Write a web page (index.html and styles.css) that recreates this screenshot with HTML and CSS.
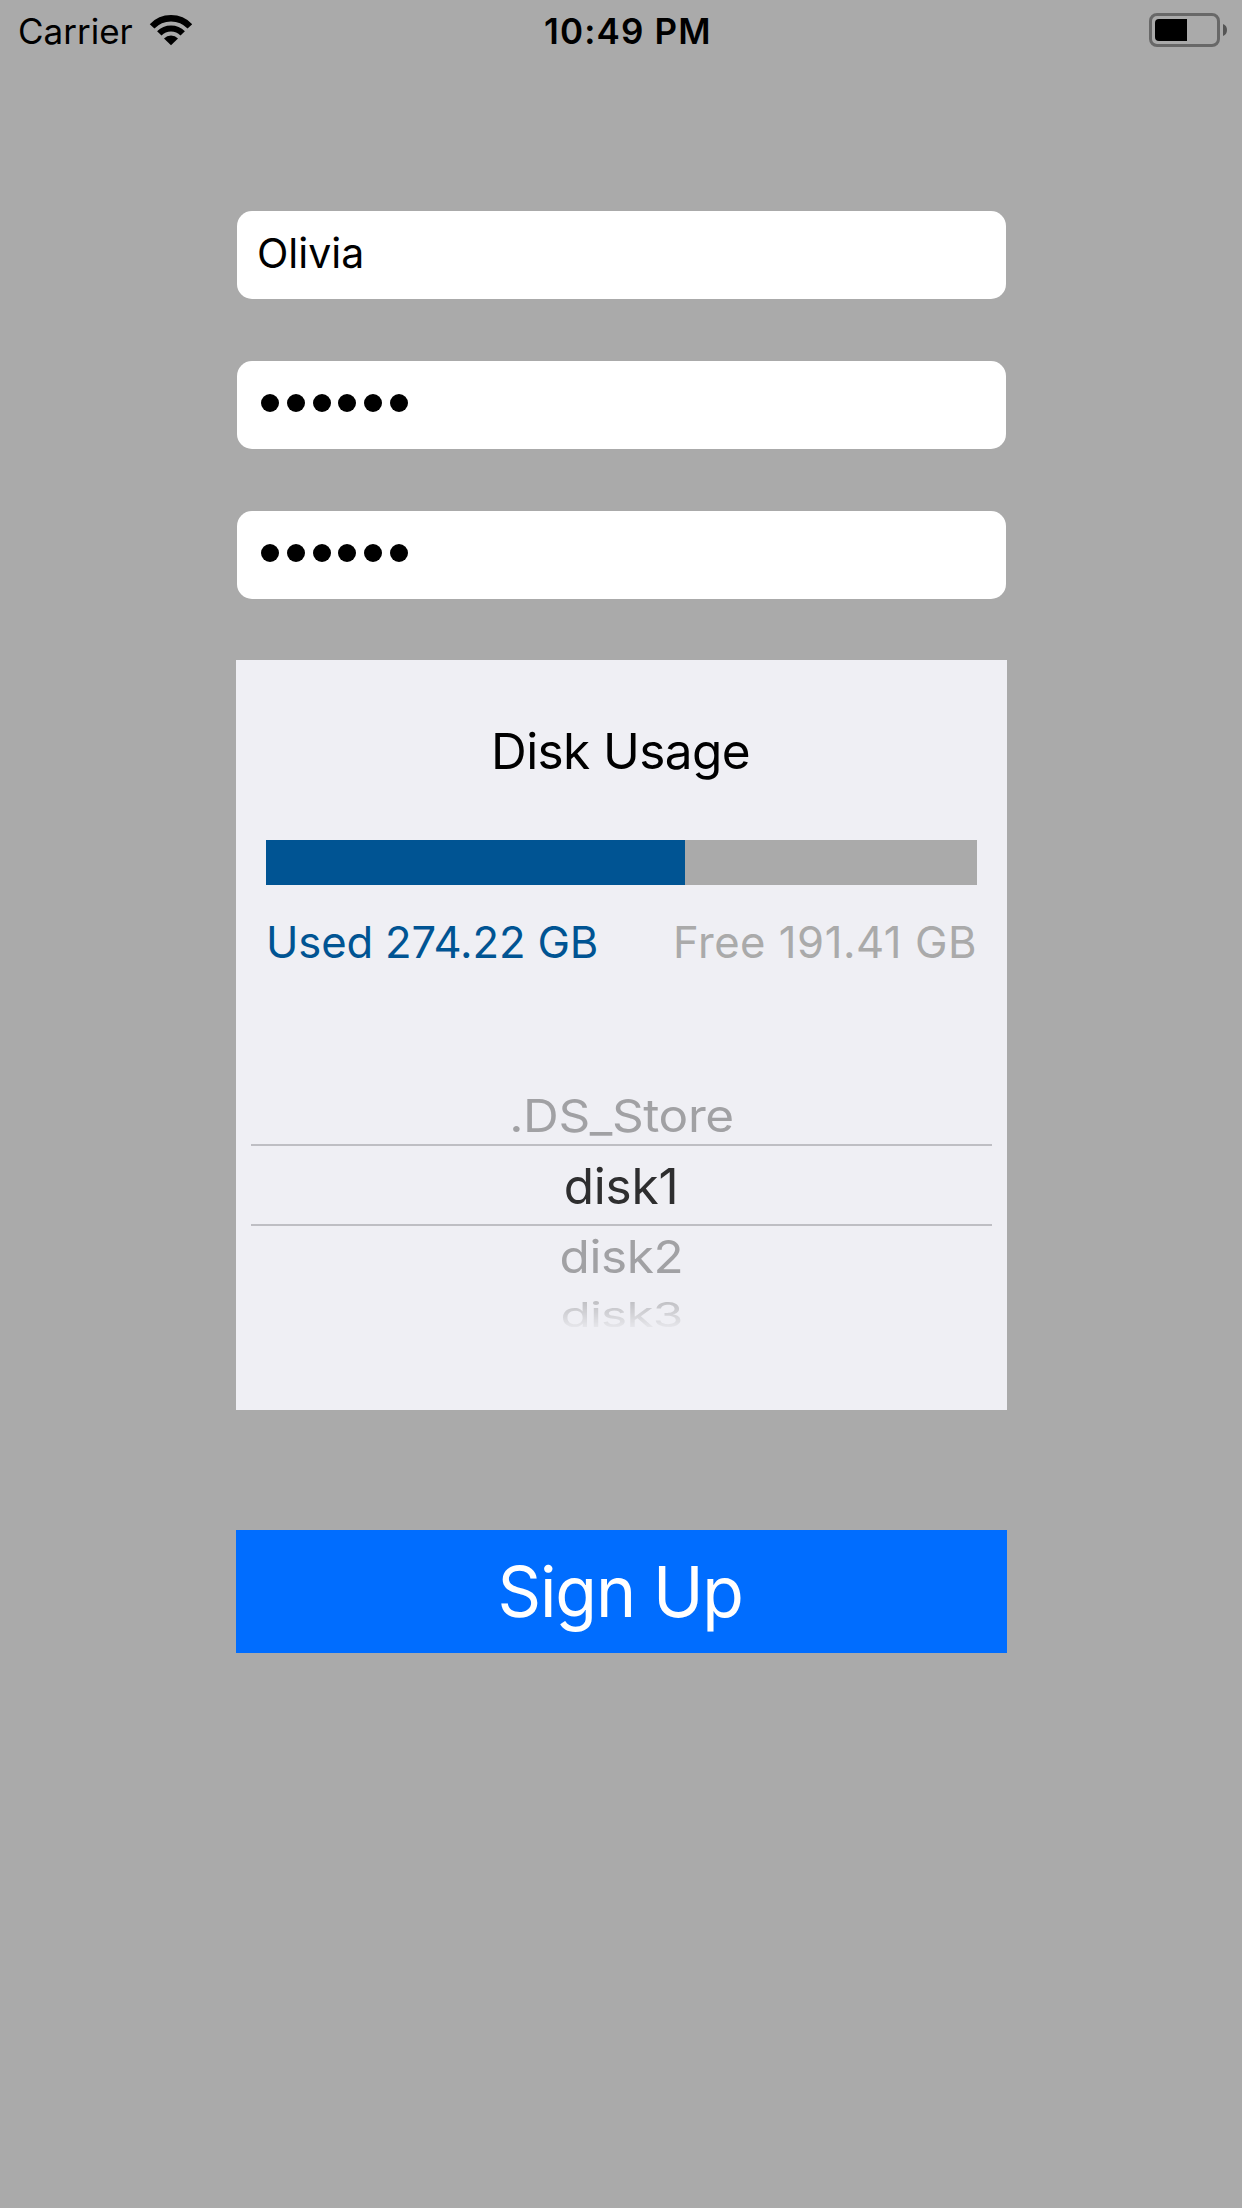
FILE: index.html
```html
<!DOCTYPE html>
<html lang="en">
<head>
<meta charset="utf-8">
<title>Sign Up</title>
<link rel="stylesheet" href="styles.css">
</head>
<body>
<header class="status">
  <div class="network">
    <span class="carrier">Carrier</span>
    <svg class="wifi" width="44" height="32" viewBox="0 0 44 32">
      <g fill="none" stroke="#000">
        <path d="M3.1 12.4A26.1 26.1 0 0 1 40.9 12.4" stroke-width="6.4"/>
        <path d="M10.3 19.4A16.4 16.4 0 0 1 33.7 19.4" stroke-width="6.2"/>
      </g>
      <path d="M22 31.2L15 24.4A10 10 0 0 1 29 24.4Z"/>
    </svg>
  </div>
  <span class="time">10:49 PM</span>
  <svg class="battery" width="80" height="34" viewBox="0 0 80 34">
    <rect x="1.5" y="1.5" width="68" height="31" rx="6.5" fill="none" stroke="#686868" stroke-width="3"/>
    <path d="M38 6V28H10Q6 28 6 24V10Q6 6 10 6Z"/>
    <path d="M74 11Q78 12.5 78 17T74 23Z" fill="#555"/>
  </svg>
</header>
<main class="form">
  <div class="field name">Olivia</div>
  <div class="field dots"><i></i><i></i><i></i><i></i><i></i><i></i></div>
  <div class="field dots"><i></i><i></i><i></i><i></i><i></i><i></i></div>
  <section class="card">
    <h1 class="title">Disk Usage</h1>
    <div class="bar"><div class="used-bar"></div></div>
    <div class="labels"><span class="used">Used 274.22 GB</span><span class="free">Free 191.41 GB</span></div>
    <div class="picker">
      <div class="row store"><span>.DS_Store</span></div>
      <div class="row selected"><span>disk1</span></div>
      <div class="row below"><span>disk2</span></div>
      <div class="row last"><span>disk3</span></div>
    </div>
  </section>
  <button class="signup"><span>Sign Up</span></button>
</main>
</body>
</html>
```
FILE: styles.css
```css
* { box-sizing: border-box; }
body {
  margin: 0;
  min-height: 2208px;
  background: #aaa;
  color: #000;
  font-family: Inter, "Liberation Sans", sans-serif;
}
.status {
  display: grid;
  grid-template-columns: 544px 1fr 93px;
  height: 62px;
  font-size: 35px;
  line-height: 62px;
}
.network { display: flex; padding-left: 18px; }
.carrier { width: 131px; }
.wifi { margin-top: 14px; }
.time { font-weight: 560; letter-spacing: 1.15px; }
.battery { margin-top: 13px; }
.form {
  display: flex;
  flex-direction: column;
  width: 771px;
  margin: 149px 0 0 236px;
}
.field {
  height: 88px;
  margin: 0 1px 62px;
  border-radius: 15px;
  background: #fff;
}
.name {
  padding-left: 20px;
  font-size: 41px;
  line-height: 84px;
}
.dots {
  display: flex;
  align-items: center;
  gap: 7.8px;
  padding: 0 0 4px 24px;
}
.dots i {
  width: 18px;
  height: 18px;
  border-radius: 50%;
  background: #000;
}
.card {
  height: 750px;
  margin-top: -1px;
  padding: 0 15px;
  background: #efeff4;
}
.title {
  height: 180px;
  margin: 0;
  padding-right: 2px;
  font-size: 49.5px;
  font-weight: 400;
  line-height: 182px;
  letter-spacing: -0.6px;
  text-align: center;
}
.bar {
  height: 45px;
  margin: 0 15px;
  background: #aaa;
}
.used-bar {
  width: 419px;
  height: 45px;
  background: #005493;
}
.labels {
  display: flex;
  justify-content: space-between;
  height: 114px;
  padding: 0 15px;
  font-size: 43.6px;
  line-height: 115px;
}
.used { color: #005493; letter-spacing: -0.15px; }
.free { color: #aaa; letter-spacing: 0.53px; }
.picker {
  padding-top: 87px;
  font-size: 49.5px;
}
.row {
  display: flex;
  justify-content: center;
  align-items: center;
  line-height: 58px;
  color: #a1a1a4;
}
.store { height: 58px; }
.store span { transform: scaleY(0.92); letter-spacing: -0.4px; }
.selected {
  height: 82px;
  border: solid #bebec3;
  border-width: 2px 0;
  color: #2e2e2f;
}
.selected span { padding: 1px 1px 0 0; letter-spacing: -0.2px; }
.below { height: 60px; }
.below span { transform: scaleY(0.92); letter-spacing: -0.4px; }
.last { height: 57px; }
.last span {
  padding-top: 1px;
  transform: scaleY(0.69);
  letter-spacing: -0.8px;
  -webkit-mask-image: linear-gradient(rgba(0,0,0,.66) 10%, rgba(0,0,0,.08) 86%);
  mask-image: linear-gradient(rgba(0,0,0,.66) 10%, rgba(0,0,0,.08) 86%);
}
.signup {
  height: 123px;
  margin-top: 120px;
  padding: 0 3px 0 0;
  border: 0;
  background: #006dff;
  color: #fff;
  font: 400 70px/121px Inter, "Liberation Sans", sans-serif;
  letter-spacing: -1.2px;
}
.signup span {
  display: inline-block;
  transform: scaleX(0.972);
}
```
